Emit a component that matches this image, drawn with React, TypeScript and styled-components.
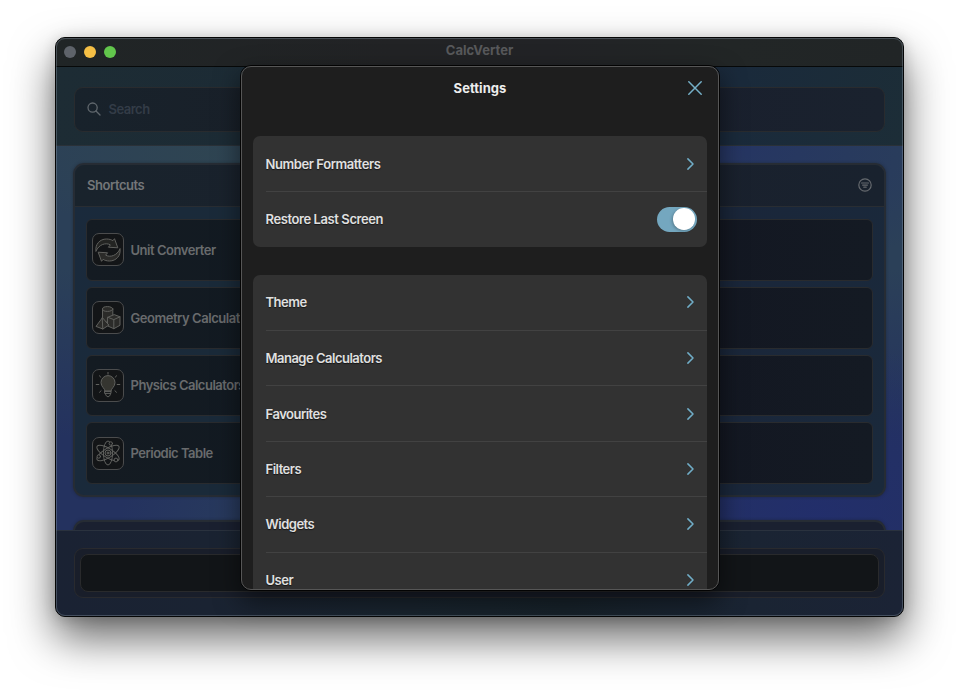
import React from "react";
import styled, { createGlobalStyle } from "styled-components";

const GlobalStyle = createGlobalStyle`
  * { box-sizing: border-box; }
  body {
    margin: 0;
    width: 959px;
    height: 690px;
    overflow: hidden;
    background: #fff;
    font-family: Inter, "Liberation Sans", sans-serif;
    font-size: 13px;
    font-weight: 560;
  }
`;

const Desktop = styled.div`
  width: 959px;
  height: 690px;
  padding: 37px 55px;
  overflow: hidden;
`;

const AppWindow = styled.div`
  position: relative;
  width: 849px;
  height: 580px;
  border: 1px solid #050606;
  border-radius: 10px;
  background: #1c242e;
  box-shadow: 0 21px 44px rgba(0, 0, 0, 0.6), 0 2px 14px rgba(0, 0, 0, 0.16);
`;

const WindowBody = styled.div`
  display: flex;
  flex-direction: column;
  height: 578px;
  border-radius: 9px;
  overflow: hidden;
`;

const WindowRim = styled.div`
  position: absolute;
  inset: 0;
  border: 1px solid rgba(150, 165, 180, 0.34);
  border-radius: 9px;
  pointer-events: none;
`;

const TitleBar = styled.div`
  display: grid;
  grid-template-columns: 1fr auto 1fr;
  height: 29px;
  flex: none;
  border-bottom: 1px solid #070909;
  background: linear-gradient(90deg, #202526 0%, #222325 40%, #222326 58%, #222626 80%, #212526 100%);
`;

const Lights = styled.div`
  display: flex;
  align-items: center;
  gap: 8px;
  padding-left: 8px;
`;

const Light = styled.i<{ $color: string }>`
  width: 12px;
  height: 12px;
  border-radius: 50%;
  background: ${(p) => p.$color};
`;

const AppTitle = styled.div`
  font-weight: 700;
  line-height: 25px;
  color: #58595b;
`;

const Header = styled.div`
  height: 79px;
  flex: none;
  padding: 20px 18px 0;
  border-bottom: 1px solid #2a3138;
  background: linear-gradient(100deg, #1d2c34 0%, #1c2b35 25%, #1a2a3c 40%, #1b2538 62%, #1a2a3b 80%, #1c2d37 100%);
`;

const SearchField = styled.div`
  display: flex;
  align-items: center;
  gap: 7.5px;
  height: 45px;
  padding: 0 0 2px 12px;
  border: 1px solid #292b2e;
  border-radius: 9px;
  background: linear-gradient(90deg, #18222b, #192029 25%, #191e2d 60%, #1a222e);
  color: #333c47;
`;

const Content = styled.div`
  height: 384px;
  flex: none;
  padding: 17px 17px 0;
  overflow: hidden;
  background:
    radial-gradient(ellipse 220px 80px at 18% 2%, rgba(48, 70, 80, 0.75), rgba(48, 70, 80, 0) 100%),
    radial-gradient(ellipse 200px 110px at 31% 98%, rgba(43, 65, 91, 0.9), rgba(43, 65, 91, 0) 100%),
    radial-gradient(ellipse 260px 130px at 80% 0%, rgba(37, 52, 100, 0.9), rgba(37, 52, 100, 0) 100%),
    radial-gradient(ellipse 260px 170px at 90% 96%, rgba(34, 46, 108, 0.9), rgba(34, 46, 108, 0) 100%),
    linear-gradient(180deg, #2b4058 0%, #2b4058 32%, #24325f 76%, #24325f 100%);
`;

const Panel = styled.section`
  height: 334px;
  border: 2px solid #262c34;
  border-radius: 11px;
  background: linear-gradient(100deg, #1a2a3c 0%, #1a2a39 20%, #1a2a3b 50%, #1a263a 74%, #1a293b 100%);
  box-shadow: 0 0 3px rgba(25, 30, 38, 0.5);
  overflow: hidden;
`;

const NextPanel = styled(Panel)`
  height: 60px;
  margin-top: 23px;
  background: #1a2030;
`;

const PanelHeader = styled.div`
  display: flex;
  justify-content: space-between;
  align-items: center;
  height: 42px;
  padding: 0 12px 1.5px;
  border-bottom: 1px solid #292d32;
  background: linear-gradient(90deg, #19232c, #1a202d 60%, #19222e);
  color: #747679;
`;

const CardList = styled.div`
  display: flex;
  flex-direction: column;
  gap: 6px;
  padding: 12px 11px;
`;

const Card = styled.div`
  display: flex;
  align-items: center;
  gap: 6.7px;
  height: 61.75px;
  padding-left: 4.8px;
  border: 1px solid #292b2e;
  border-radius: 6px;
  background: linear-gradient(90deg, #141b22, #121a22 25%, #131722 75%, #141a23);
  color: #696b6d;
  white-space: nowrap;
`;

const IconTile = styled.div`
  display: flex;
  align-items: center;
  justify-content: center;
  width: 32px;
  height: 33px;
  border: 1px solid #4b4c4d;
  border-radius: 7px;
  background: #131517;

  svg {
    width: 26px;
    height: 26px;
    flex: none;
    fill: none;
    stroke: #60615e;
    stroke-width: 1;
    stroke-linejoin: round;
    stroke-linecap: round;
  }
`;

const Footer = styled.div`
  flex: 1;
  padding: 17px 18px;
  border-top: 1px solid #2a323e;
  background: linear-gradient(90deg, #1a2233 0%, #1a2332 18%, #19242e 42%, #17222a 60%, #1a2433 82%, #1b2335 100%);
`;

const Dock = styled.div`
  height: 50px;
  padding: 5px;
  border: 1px solid #292a2e;
  border-radius: 9px;
  background: #191e2a;
`;

const DockInner = styled.div`
  height: 38px;
  border: 1px solid #292a2c;
  border-radius: 8px;
  background: #121518;
`;

const Sheet = styled.div`
  position: absolute;
  left: 184px;
  top: 27px;
  width: 480px;
  height: 526px;
  border: 1px solid #030303;
  border-radius: 11px;
  box-shadow: 0 10px 26px rgba(0, 0, 0, 0.5);
`;

const SheetBody = styled.div`
  height: 524px;
  padding: 0 11px;
  border: 1px solid #565656;
  border-radius: 10px;
  background: #1e1e1e;
  overflow: hidden;
`;

const SheetHeader = styled.div`
  display: grid;
  grid-template-columns: 1fr auto 1fr;
  align-items: center;
  height: 41px;
  padding: 0 5px;
  color: #ededed;
  font-weight: 700;

  svg {
    justify-self: end;
  }
`;

const Group = styled.div`
  margin-top: 28px;
  padding: 0 0 0.6px 12.5px;
  border-radius: 7px;
  background: #323232;
`;

const SettingRow = styled.div`
  display: flex;
  align-items: center;
  justify-content: space-between;
  height: 55.4px;
  padding-right: 13.4px;
  color: #e0e0e0;
  text-shadow: 0 1px 1px rgba(0, 0, 0, 0.6);

  &:first-child {
    height: 55px;
  }

  & + & {
    border-top: 1px solid #424242;
  }
`;

const Toggle = styled.div`
  display: flex;
  justify-content: flex-end;
  width: 39.5px;
  height: 25px;
  margin-right: -2.9px;
  padding: 1.75px;
  border-radius: 13px;
  background: #74a7bf;

  &::after {
    content: "";
    width: 21.5px;
    height: 21.5px;
    border-radius: 50%;
    background: #fff;
    box-shadow: -1px 1px 3px rgba(0, 0, 0, 0.25);
  }
`;

const Label = styled.span<{ $track?: number }>`
  letter-spacing: ${(p) => p.$track ?? -0.5}px;
`;

const Chevron = () => (
  <svg width="7" height="12" viewBox="0 0 7 12" fill="none" stroke="#70adc7" strokeWidth="1.5" strokeLinecap="round" strokeLinejoin="round">
    <path d="M.9.9 6 6 .9 11.1" />
  </svg>
);

const Close = () => (
  <svg width="14" height="14" viewBox="0 0 14 14" stroke="#75b0c8" strokeWidth="1.5" strokeLinecap="round">
    <path d="M.8.8 13.2 13.2M13.2.8.8 13.2" />
  </svg>
);

const SearchIcon = () => (
  <svg width="14" height="14" viewBox="0 0 14 14" fill="none" stroke="#60676d" strokeWidth="1.3" strokeLinecap="round">
    <circle cx="5.6" cy="5.6" r="4.6" />
    <path d="m9 9 4 4" />
  </svg>
);

const FilterIcon = () => (
  <svg width="14" height="14" viewBox="0 0 14 14" fill="none" stroke="#65696e" strokeWidth="1.2" strokeLinecap="round">
    <circle cx="7" cy="7" r="6.2" />
    <path d="M3.500 5h7M4.600 7.100h4.800M5.800 9.200h2.400" />
  </svg>
);

const ConverterIcon = () => (
  <svg viewBox="0 0 26 26">
    <path fill="#232422" d="M1 14C-.2 7.500 4.800 2 11.500 2c2.600 0 5 .7 6.400 1.700l1.600-2 3.300 9.100-9.400-.6 2-2.300C11 5.300 4 7.200 1 14Z" />
    <path fill="#2b2b29" d="M25 12c1.200 6.500-3.800 12-10.500 12-2.600 0-5-.7-6.400-1.700L6.500 24.300 3.200 15.200l9.400.6-2 2.300C15 20.700 22 18.800 25 12Z" />
  </svg>
);

const GeometryIcon = () => (
  <svg viewBox="0 0 26 26">
    <path fill="#2b2b29" d="M7.500 4.200v13h10.300v-13" />
    <ellipse cx="12.650" cy="4" rx="5.150" ry="2.400" fill="#2b2b29" />
    <path fill="#2b2b29" d="m12.800 12.300 6.400-2.700 5.800 2.200v8.500l-6.200 3.400-6-2.700Z" />
    <path d="m12.800 12.300 6 2.300 6.200-2.800M18.800 14.600v9.100" />
    <path fill="#2b2b29" d="m7.200 13-6.200 8.400 6.800 2.600 5.800-3.700Z" />
    <path d="m7.200 13 .6 11" />
  </svg>
);

const PhysicsIcon = () => (
  <svg viewBox="0 0 26 26">
    <path fill="#353530" d="M10 19c0-2.800-4-4-4-8.400a7 7 0 0 1 14 0c0 4.400-4 5.600-4 8.400Z" />
    <path d="M10 19h6v2.400h-6zM10.700 21.400v1.500l1.400 1.700h1.800l1.400-1.700v-1.500M13 .3v1.800M1.200 12.500h2.600M22.200 12.500h2.600M4.300 3.700l1.600 1.600M21.700 3.700l-1.600 1.600M4.500 20.300l1.600-1.600M21.500 20.300l-1.600-1.600" />
  </svg>
);

const AtomIcon = () => (
  <svg viewBox="0 0 26 26">
    <ellipse cx="13" cy="13" rx="4.600" ry="12" />
    <ellipse cx="13" cy="13" rx="4.600" ry="12.800" transform="rotate(58 13 13)" />
    <ellipse cx="13" cy="13" rx="4.600" ry="12.800" transform="rotate(-58 13 13)" />
    <circle cx="13" cy="13" r="3" fill="#1c1d1d" />
    <circle cx="13" cy="13" r="0.900" />
    <circle cx="15.800" cy="3.500" r="1.700" fill="#131517" />
    <circle cx="21" cy="20" r="1.900" fill="#131517" />
    <circle cx="3.800" cy="16.500" r="1.700" fill="#131517" />
  </svg>
);

const shortcuts = [
  { label: "Unit Converter", track: -0.47, Icon: ConverterIcon },
  { label: "Geometry Calculators", track: -0.45, Icon: GeometryIcon },
  { label: "Physics Calculators", track: -0.49, Icon: PhysicsIcon },
  { label: "Periodic Table", track: -0.5, Icon: AtomIcon },
];

const sections = ["Theme", "Manage Calculators", "Favourites", "Filters", "Widgets", "User"];

export default function App() {
  return (
    <>
      <GlobalStyle />
      <Desktop>
        <AppWindow>
          <WindowBody>
            <TitleBar>
              <Lights>
                <Light $color="#5e636a" />
                <Light $color="#f5bf45" />
                <Light $color="#62c64c" />
              </Lights>
              <AppTitle>CalcVerter</AppTitle>
            </TitleBar>
            <Header>
              <SearchField>
                <SearchIcon />
                <Label $track={-0.5}>Search</Label>
              </SearchField>
            </Header>
            <Content>
              <Panel>
                <PanelHeader>
                  <Label $track={-0.45}>Shortcuts</Label>
                  <FilterIcon />
                </PanelHeader>
                <CardList>
                  {shortcuts.map(({ label, track, Icon }) => (
                    <Card key={label}>
                      <IconTile><Icon /></IconTile>
                      <Label $track={track}>{label}</Label>
                    </Card>
                  ))}
                </CardList>
              </Panel>
              <NextPanel />
            </Content>
            <Footer>
              <Dock><DockInner /></Dock>
            </Footer>
          </WindowBody>
          <WindowRim />
          <Sheet>
            <SheetBody>
              <SheetHeader>
                <span />
                <Label $track={0.05}>Settings</Label>
                <Close />
              </SheetHeader>
              <Group>
                <SettingRow><Label $track={-0.42}>Number Formatters</Label><Chevron /></SettingRow>
                <SettingRow><Label $track={-0.41}>Restore Last Screen</Label><Toggle /></SettingRow>
              </Group>
              <Group>
                {sections.map((name) => (
                  <SettingRow key={name}><Label>{name}</Label><Chevron /></SettingRow>
                ))}
              </Group>
            </SheetBody>
          </Sheet>
        </AppWindow>
      </Desktop>
    </>
  );
}
